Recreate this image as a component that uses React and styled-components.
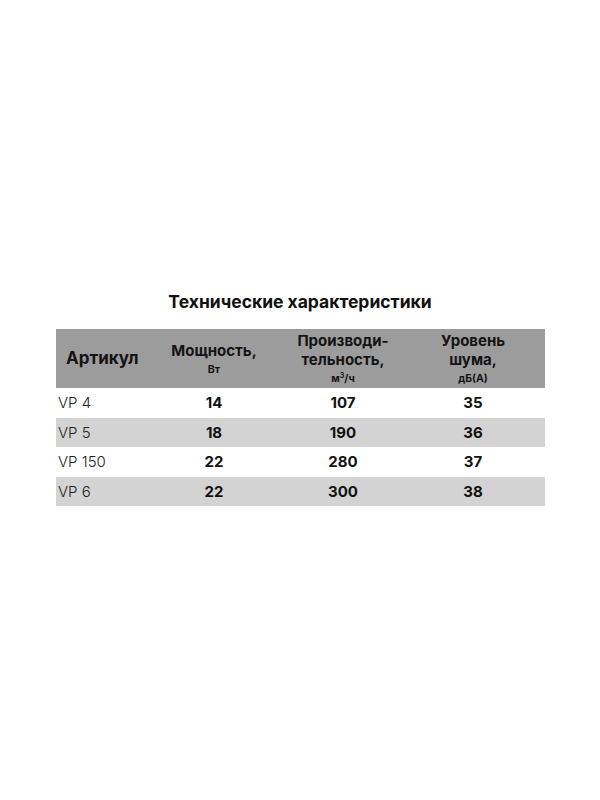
import React from "react";
import styled, { createGlobalStyle } from "styled-components";

const rows = [
  { name: "VP 4", power: "14", flow: "107", noise: "35" },
  { name: "VP 5", power: "18", flow: "190", noise: "36" },
  { name: "VP 150", power: "22", flow: "280", noise: "37" },
  { name: "VP 6", power: "22", flow: "300", noise: "38" },
];

const App = () => {
  return (
    <>
      <GlobalStyle />
      <Page>
        <Title>Технические характеристики</Title>
        <Table>
          <HeadRow>
            <HeadCell left>Артикул</HeadCell>
            <HeadCell>
              <Line>Мощность,</Line>
              <Unit>Вт</Unit>
            </HeadCell>
            <HeadCell>
              <Line>Производи-</Line>
              <Line>тельность,</Line>
              <Unit>
                м<sup>3</sup>/ч
              </Unit>
            </HeadCell>
            <HeadCell>
              <Line>Уровень</Line>
              <Line>шума,</Line>
              <Unit>дБ(А)</Unit>
            </HeadCell>
          </HeadRow>
          {rows.map((r, i) => (
            <Row key={r.name} shaded={i % 2 === 1}>
              <NameCell>{r.name}</NameCell>
              <Cell>{r.power}</Cell>
              <Cell>{r.flow}</Cell>
              <Cell>{r.noise}</Cell>
            </Row>
          ))}
        </Table>
      </Page>
    </>
  );
};

export default App;

const GlobalStyle = createGlobalStyle`
  body {
    margin: 0;
    background: #fff;
    font-family: Inter, "Noto Sans", sans-serif;
    color: #111;
  }
`;

const Page = styled.div`
  width: 600px;
  height: 800px;
  display: flex;
  flex-direction: column;
  align-items: center;
  padding-top: 290px;
  box-sizing: border-box;
`;

const Title = styled.h1`
  margin: 0 0 15px;
  font-size: 17.5px;
  font-weight: 700;
  line-height: 24px;
  color: #111;
`;

const Table = styled.div`
  width: 489px;
  margin-left: 1px;
  display: flex;
  flex-direction: column;
`;

const Grid = styled.div`
  display: grid;
  grid-template-columns: 95px 126px 132px 128px 8px;
`;

const HeadRow = styled(Grid)`
  height: 59px;
  background: #9c9c9c;
  align-items: center;
`;

const HeadCell = styled.div`
  display: flex;
  flex-direction: column;
  align-items: ${(p) => (p.left ? "flex-start" : "center")};
  text-align: ${(p) => (p.left ? "left" : "center")};
  padding-left: ${(p) => (p.left ? "10px" : "0")};
  font-size: ${(p) => (p.left ? "17px" : "15px")};
  font-weight: 700;
  line-height: 19px;
  color: #141414;
`;

const Line = styled.span`
  display: block;
  white-space: nowrap;
`;

const Unit = styled.span`
  font-size: 10.5px;
  line-height: 14px;
  margin-top: 3px;

  sup {
    font-size: 7px;
    line-height: 0;
  }
`;

const Row = styled(Grid)`
  height: 29.5px;
  align-items: center;
  background: ${(p) => (p.shaded ? "#d3d3d3" : "#fff")};
`;

const NameCell = styled.div`
  padding-left: 2px;
  font-size: 15px;
  font-weight: 300;
  color: #222;
`;

const Cell = styled.div`
  text-align: center;
  font-size: 15px;
  font-weight: 700;
  color: #111;
`;
